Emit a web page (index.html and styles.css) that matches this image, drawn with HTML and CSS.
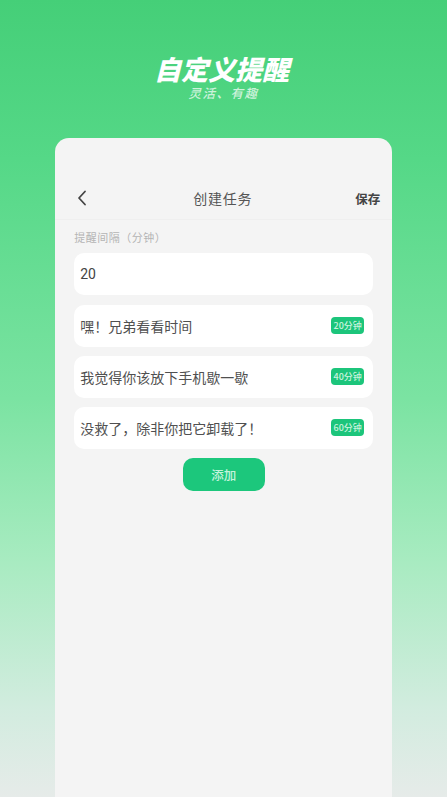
FILE: index.html
```html
<!DOCTYPE html>
<html lang="zh-CN">
<head>
<meta charset="utf-8">
<title>自定义提醒</title>
<link rel="stylesheet" href="styles.css">
</head>
<body>
<main class="screen">
  <header class="hero">
    <h1 class="hero-title">自定义提醒</h1>
    <p class="hero-sub">灵活、有趣</p>
  </header>
  <section class="card">
    <div class="nav">
      <svg class="back" viewBox="0 0 12 18" width="12" height="18" aria-hidden="true"><path d="M9 2.500 3 9l6 6.500" fill="none" stroke="#444" stroke-width="1.800" stroke-linecap="round" stroke-linejoin="round"/></svg>
      <span class="nav-title">创建任务</span>
      <span class="nav-save">保存</span>
    </div>
    <div class="body">
      <label class="field-label">提醒间隔（分钟）</label>
      <div class="input">20</div>
      <ul class="list">
        <li class="row"><span>嘿！兄弟看看时间</span><span class="tag">20分钟</span></li>
        <li class="row"><span>我觉得你该放下手机歇一歇</span><span class="tag">40分钟</span></li>
        <li class="row"><span>没救了，除非你把它卸载了！</span><span class="tag">60分钟</span></li>
      </ul>
      <button class="add" type="button">添加</button>
    </div>
  </section>
</main>
</body>
</html>
```
FILE: styles.css
```css
* { box-sizing: border-box; }
html, body { margin: 0; padding: 0; height: 100%; }
body {
  font-family: "Noto Sans CJK SC", "Noto Sans", sans-serif;
  color: #444;
  overflow: hidden;
}
.screen {
  height: 797px;
  display: flex;
  flex-direction: column;
  align-items: center;
  background: linear-gradient(180deg, #45cf78 0%, #55d887 20%, #7be3a2 50%, #a7ebc0 70%, #d2ecdf 89%, #e6ebe9 100%);
}
.hero {
  height: 138px;
  padding-top: 54px;
  display: flex;
  flex-direction: column;
  align-items: center;
}
.hero-title {
  margin: 0 4px 0 0;
  font-size: 27px;
  line-height: 30px;
  font-weight: 900;
  font-style: italic;
  color: #fff;
}
.hero-sub {
  margin: 2px 0 0;
  font-size: 12.500px;
  line-height: 14px;
  font-style: italic;
  font-weight: 500;
  letter-spacing: 1.500px;
  color: rgba(255, 255, 255, 0.72);
}
.card {
  width: 337px;
  flex: 1;
  margin-left: 0.500px;
  background: #f4f4f4;
  border-radius: 14px 14px 0 0;
}
.nav {
  height: 82px;
  padding: 38px 12px 0 21px;
  display: flex;
  align-items: center;
  justify-content: space-between;
  border-bottom: 1px solid #efefef;
}
.back { display: block; }
.nav-title {
  font-size: 14px;
  color: #555;
  letter-spacing: 0.700px;
  margin-left: 2px;
}
.nav-save {
  padding-top: 1px;
  font-size: 12.500px;
  font-weight: 700;
  color: #444;
}
.body {
  padding: 9px 19px 0;
  display: flex;
  flex-direction: column;
}
.field-label {
  font-size: 11px;
  line-height: 16px;
  letter-spacing: 0.500px;
  color: #b4b4b4;
}
.input {
  margin-top: 8px;
  height: 42px;
  padding-left: 6px;
  display: flex;
  align-items: center;
  border-radius: 10px;
  background: #fff;
  font-family: "Roboto", sans-serif;
  font-size: 14px;
  color: #444;
}
.list {
  list-style: none;
  margin: 10px 0 0;
  padding: 0;
  display: flex;
  flex-direction: column;
  gap: 9px;
}
.row {
  height: 42px;
  padding: 0 9px 1px 6px;
  display: flex;
  align-items: center;
  justify-content: space-between;
  border-radius: 10px;
  background: #fff;
  font-size: 14px;
  color: #505050;
}
.tag {
  width: 33px;
  height: 17px;
  display: flex;
  align-items: center;
  justify-content: center;
  border-radius: 4px;
  background: #1cc57b;
  color: #c9f3de;
  font-size: 9px;
  font-weight: 500;
  white-space: nowrap;
}
.add {
  align-self: center;
  width: 82px;
  height: 33px;
  margin-top: 9px;
  border: 0;
  border-radius: 10px;
  background: #1cc77c;
  color: #c4f3dc;
  font-family: inherit;
  font-size: 12.500px;
  font-weight: 500;
}
```
